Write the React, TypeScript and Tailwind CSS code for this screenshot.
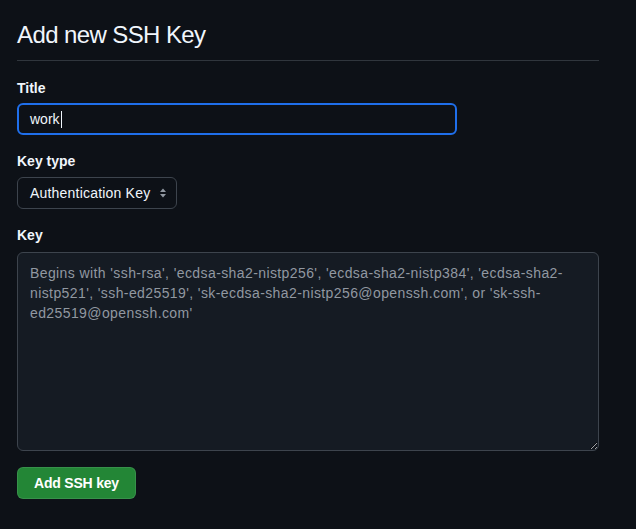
export default function App() {
  return (
    <div className="min-h-[529px] w-full bg-[#0d1117] text-[#f0f6fc]" style={{ fontFamily: '"Liberation Sans", Arial, sans-serif' }}>
      <div className="w-[582px] pl-[17px] pt-5 box-content">
        <h2 className="border-b border-[#30363d] pb-[10px] text-[24px] leading-[30px] font-normal tracking-[-0.6px]">Add new SSH Key</h2>

        <div className="mt-[17px]">
          <label className="mb-[5px] block text-sm leading-5 font-semibold">Title</label>
          <div className="flex h-8 w-[440px] items-center rounded-md border-2 border-[#1f6feb] bg-[#0d1117] px-[11px] text-sm">
            <span>work</span>
            <span className="ml-px h-[17px] w-px bg-[#f0f6fc]" />
          </div>
        </div>

        <div className="mt-4">
          <label className="mb-1.5 block text-sm leading-5 font-semibold">Key type</label>
          <div className="flex h-8 w-[160px] items-center justify-between rounded-md border border-[#3d444d] bg-[#0d1117] pl-3 pr-[9px] text-sm tracking-[0.2px]">
            <span>Authentication Key</span>
            <svg width="8" height="12" viewBox="0 0 8 12" fill="#9198a1">
              <path d="M4 1.5 7 5H1z" />
              <path d="M4 10.5 1 7h6z" />
            </svg>
          </div>
        </div>

        <div className="mt-4">
          <label className="mb-[7px] block text-sm leading-5 font-semibold">Key</label>
          <textarea
            className="block h-[199px] w-full rounded-md border border-[#3d444d] bg-[#151b23] px-3 py-[10px] text-sm leading-5 tracking-[0.4px] text-[#f0f6fc] placeholder:text-[#9198a1] outline-none"
            placeholder="Begins with 'ssh-rsa', 'ecdsa-sha2-nistp256', 'ecdsa-sha2-nistp384', 'ecdsa-sha2-nistp521', 'ssh-ed25519', 'sk-ecdsa-sha2-nistp256@openssh.com', or 'sk-ssh-ed25519@openssh.com'"
          />
        </div>

        <button className="mt-4 h-8 w-[119px] rounded-md border border-[#f0f6fc1a] bg-[#238636] text-sm font-semibold tracking-[-0.2px] text-white">
          Add SSH key
        </button>
      </div>
    </div>
  )
}
